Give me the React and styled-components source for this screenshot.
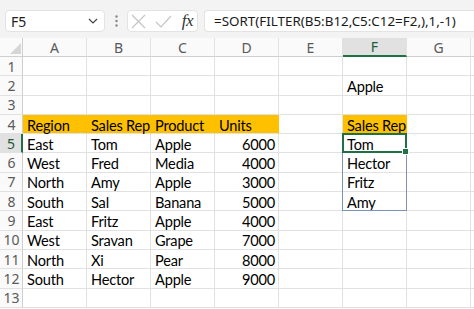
import React from 'react';
import styled, {createGlobalStyle} from 'styled-components';

const GlobalStyle = createGlobalStyle`
  html, body {
    margin: 0;
    padding: 0;
    background: #fff;
    overflow: hidden;
  }
`;

const COLUMNS = ['A', 'B', 'C', 'D', 'E', 'F', 'G'];
const ROW_COUNT = 13;

const cells = {
  F2: {text: 'Apple'},
  A4: {text: 'Region', head: true},
  B4: {text: 'Sales Rep', head: true},
  C4: {text: 'Product', head: true},
  D4: {text: 'Units', head: true},
  F4: {text: 'Sales Rep', head: true},
  F5: {text: 'Tom'},
  F6: {text: 'Hector'},
  F7: {text: 'Fritz'},
  F8: {text: 'Amy'},
};

const data = [
  ['East', 'Tom', 'Apple', 6000],
  ['West', 'Fred', 'Media', 4000],
  ['North', 'Amy', 'Apple', 3000],
  ['South', 'Sal', 'Banana', 5000],
  ['East', 'Fritz', 'Apple', 4000],
  ['West', 'Sravan', 'Grape', 7000],
  ['North', 'Xi', 'Pear', 8000],
  ['South', 'Hector', 'Apple', 9000],
];
data.forEach((row, i) => {
  const r = i + 5;
  cells[`A${r}`] = {text: row[0]};
  cells[`B${r}`] = {text: row[1]};
  cells[`C${r}`] = {text: row[2]};
  cells[`D${r}`] = {text: String(row[3]), number: true};
});

const Page = styled.div`
  width: 474px;
  height: 309px;
  overflow: hidden;
  background: #fff;
  font-family: "Noto Sans", "Open Sans", sans-serif;
  display: flex;
  flex-direction: column;
`;

const Toolbar = styled.div`
  display: flex;
  align-items: center;
  flex: 0 0 38px;
  height: 38px;
  padding: 0 0 0 5px;
  background: #f3f3f3;
  box-sizing: border-box;
`;

const Field = styled.div`
  display: flex;
  align-items: center;
  height: 22px;
  box-sizing: border-box;
  background: #fff;
  border: 1px solid #e3e3e3;
  border-radius: 4px;
  margin-top: 4px;
`;

const NameBox = styled(Field)`
  width: 100px;
  padding: 0 6px 0 5px;
  justify-content: space-between;
  font-size: 14px;
  color: #222;
`;

const Grip = styled.div`
  width: 22px;
  display: flex;
  justify-content: center;
  margin-top: 4px;
`;

const FxBox = styled(Field)`
  width: 71px;
  padding: 0 4px 0 3px;
  justify-content: space-between;
  margin-right: 6px;
`;

const FxLabel = styled.span`
  font-family: "Liberation Serif", serif;
  font-style: italic;
  font-size: 17px;
  color: #333;
  letter-spacing: -0.5px;
`;

const FormulaBox = styled(Field)`
  flex: 1;
  border-right: none;
  border-radius: 4px 0 0 4px;
  padding-left: 9px;
  font-size: 13.4px;
  color: #1a1a1a;
  white-space: nowrap;
`;

const Sheet = styled.div`
  flex: 1 0 auto;
  display: grid;
  grid-template-columns: 23px repeat(7, 64px) 1fr;
  grid-template-rows: 19px repeat(${ROW_COUNT}, 19.3px) 1fr;
`;

const Corner = styled.div`
  grid-row: 1;
  grid-column: 1;
  background: #fafafa;
  border-right: 1px solid #cfcfcf;
  border-bottom: 1px solid #cfcfcf;
  display: flex;
  align-items: flex-end;
  justify-content: flex-end;
  padding: 0 1px 2px 0;
`;

const ColHead = styled.div`
  grid-row: 1;
  grid-column: ${p => p.$col};
  background: ${p => (p.$active ? '#e1e1e1' : '#fafafa')};
  border-right: 1px solid #e1e1e1;
  border-bottom: ${p => (p.$active ? '2px solid #1f7145' : '1px solid #cfcfcf')};
  color: ${p => (p.$active ? '#1f5c3a' : '#595959')};
  font-size: 14px;
  display: flex;
  align-items: center;
  justify-content: center;
  box-sizing: border-box;
`;

const RowHead = styled.div`
  grid-row: ${p => p.$row};
  grid-column: 1;
  background: ${p => (p.$active ? '#e1e1e1' : '#fafafa')};
  border-bottom: 1px solid #e1e1e1;
  border-right: ${p => (p.$active ? '2px solid #1f7145' : '1px solid #cfcfcf')};
  color: ${p => (p.$active ? '#1f5c3a' : '#595959')};
  font-size: 14px;
  display: flex;
  align-items: center;
  justify-content: center;
  padding-left: 1px;
  box-sizing: border-box;
`;

const Cell = styled.div`
  grid-row: ${p => p.$row};
  grid-column: ${p => p.$col};
  background: ${p => (p.$head ? '#ffc000' : '#fff')};
  border-right: 1px solid ${p => (p.$head ? '#ffc000' : '#e1e1e1')};
  border-bottom: 1px solid #e1e1e1;
  font-family: "Lato", "Liberation Sans", sans-serif;
  font-size: 14.6px;
  letter-spacing: -0.2px;
  color: #000;
  display: flex;
  align-items: center;
  justify-content: ${p => (p.$number ? 'flex-end' : 'flex-start')};
  padding: 2px 3px 0 4px;
  box-sizing: border-box;
  white-space: nowrap;
`;

const SpillRange = styled.div`
  grid-column: 7;
  grid-row: 6 / 10;
  border: 1px solid #7b93b8;
  margin: -1px 0 0 -1px;
  pointer-events: none;
  z-index: 1;
`;

const Selection = styled.div`
  grid-column: 7;
  grid-row: 6;
  border: 2px solid #1f7145;
  margin: -1px 0 0 -1px;
  position: relative;
  pointer-events: none;
  z-index: 2;

  &::after {
    content: '';
    position: absolute;
    right: -4px;
    bottom: -4px;
    width: 5px;
    height: 5px;
    background: #1f7145;
    border: 1px solid #fff;
  }
`;

const Chevron = () => (
  <svg width="10" height="6" viewBox="0 0 10 6">
    <path d="M1 1l4 4 4-4" fill="none" stroke="#444" strokeWidth="1.2" />
  </svg>
);

const Dots = () => (
  <svg width="3" height="12" viewBox="0 0 3 12">
    <circle cx="1.5" cy="1.5" r="1.2" fill="#888" />
    <circle cx="1.5" cy="6" r="1.2" fill="#888" />
    <circle cx="1.5" cy="10.5" r="1.2" fill="#888" />
  </svg>
);

const Cross = () => (
  <svg width="15" height="15" viewBox="0 0 15 15">
    <path d="M1 1l13 13M14 1L1 14" stroke="#c4c4c4" strokeWidth="1.2" />
  </svg>
);

const Check = () => (
  <svg width="17" height="13" viewBox="0 0 17 13">
    <path d="M1 7l5 5L16 1" fill="none" stroke="#c4c4c4" strokeWidth="1.2" />
  </svg>
);

const CornerMark = () => (
  <svg width="11" height="11" viewBox="0 0 11 11">
    <path d="M11 0V11H0Z" fill="#d6d6d6" />
  </svg>
);

const App = () => {
  const rows = Array.from({length: ROW_COUNT}, (_, i) => i + 1);
  return (
    <Page>
      <GlobalStyle />
      <Toolbar>
        <NameBox>
          <span>F5</span>
          <Chevron />
        </NameBox>
        <Grip>
          <Dots />
        </Grip>
        <FxBox>
          <Cross />
          <Check />
          <FxLabel>fx</FxLabel>
        </FxBox>
        <FormulaBox>=SORT(FILTER(B5:B12,C5:C12=F2,),1,-1)</FormulaBox>
      </Toolbar>
      <Sheet>
        <Corner>
          <CornerMark />
        </Corner>
        {COLUMNS.map((col, c) => (
          <ColHead key={col} $col={c + 2} $active={col === 'F'}>{col}</ColHead>
        ))}
        <ColHead $col={9} />
        {rows.map(r => (
          <React.Fragment key={r}>
            <RowHead $row={r + 1} $active={r === 5}>{r}</RowHead>
            {COLUMNS.map((col, c) => {
              const cell = cells[`${col}${r}`] || {};
              return (
                <Cell
                  key={col}
                  $row={r + 1}
                  $col={c + 2}
                  $head={cell.head}
                  $number={cell.number}
                >
                  {cell.text}
                </Cell>
              );
            })}
            <Cell $row={r + 1} $col={9} />
          </React.Fragment>
        ))}
        <SpillRange />
        <Selection />
      </Sheet>
    </Page>
  );
};

export default App;
